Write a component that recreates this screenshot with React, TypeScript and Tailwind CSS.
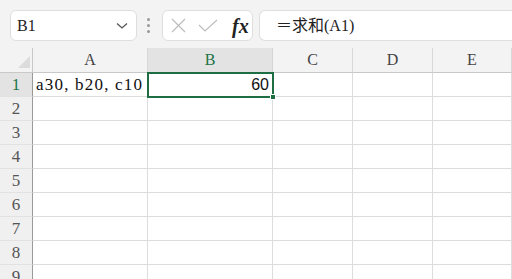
import React from 'react';

const cols = [
  { name: 'A', w: 'w-[115px] shrink-0' },
  { name: 'B', w: 'w-[125px] shrink-0' },
  { name: 'C', w: 'w-[80px] shrink-0' },
  { name: 'D', w: 'w-[80px] shrink-0' },
  { name: 'E', w: 'min-w-0 flex-1' },
];

const rows = [1, 2, 3, 4, 5, 6, 7, 8, 9];

const serif = "font-['Liberation_Serif','Noto_Sans_CJK_SC',serif]";
const sans = "font-['Liberation_Sans','Noto_Sans',sans-serif]";

const Toolbar: React.FC = () => (
  <div className="flex h-[47px] items-start bg-[#f3f3f3] pl-[10px] pt-[10px]">
    <div className="flex h-[31px] w-[127px] shrink-0 items-center justify-between rounded-md border border-[#dedede] bg-white pl-[6px] pr-[8px]">
      <span className={`${serif} text-[16px] text-[#222]`}>B1</span>
      <svg width="12" height="8" viewBox="0 0 12 8" fill="none">
        <path d="M1 1.5 L6 6 L11 1.5" stroke="#555" strokeWidth="1.3" />
      </svg>
    </div>
    <div className="ml-[10px] flex h-[31px] shrink-0 flex-col items-center justify-center gap-[3px]">
      <span className="h-[3px] w-[3px] rounded-full bg-[#999]" />
      <span className="h-[3px] w-[3px] rounded-full bg-[#999]" />
      <span className="h-[3px] w-[3px] rounded-full bg-[#999]" />
    </div>
    <div className="ml-[12px] flex h-[31px] w-[91px] shrink-0 items-center rounded-md border border-[#dedede] bg-white pl-[8px]">
      <svg width="15" height="15" viewBox="0 0 15 15" fill="none">
        <path d="M1 1 L14 14 M14 1 L1 14" stroke="#bdbdbd" strokeWidth="1.2" />
      </svg>
      <svg className="ml-[12px]" width="20" height="13" viewBox="0 0 20 13" fill="none">
        <path d="M1 6 L7 12 L19 1" stroke="#bdbdbd" strokeWidth="1.2" />
      </svg>
      <span className={`${serif} ml-[14px] text-[20px] font-bold italic leading-none text-[#222]`}>fx</span>
    </div>
    <div className="ml-[6px] flex h-[31px] flex-1 items-center rounded-l-md border border-r-0 border-[#dedede] bg-white pl-[16px]">
      <span className={`${serif} text-[16px] text-[#222]`}>＝求和(A1)</span>
    </div>
  </div>
);

const App: React.FC = () => {
  return (
    <div className="relative h-[279px] w-[512px] overflow-hidden bg-white">
      <Toolbar />
      <div className="flex h-[26px] bg-[#f3f3f3] pt-[1px]">
        <div className="relative h-[25px] w-[33px] shrink-0 border-b border-r border-[#c8c8c8]">
          <svg className="absolute bottom-[4px] right-[2px]" width="12" height="12" viewBox="0 0 12 12">
            <path d="M12 0 L12 12 L0 12 Z" fill="#dcdcdc" />
          </svg>
        </div>
        {cols.map((c) => (
          <div
            key={c.name}
            className={`${c.w} ${serif} flex h-[25px] items-center justify-center border-b border-r text-[16px] ${
              c.name === 'B'
                ? 'border-b-[#c8c8c8] border-r-[#d4d4d4] bg-[#e3e3e3] text-[#217346]'
                : 'border-[#d8d8d8] border-b-[#c8c8c8] text-[#444]'
            }`}
          >
            {c.name}
          </div>
        ))}
      </div>
      {rows.map((r) => (
        <div key={r} className="flex h-[24px]">
          <div
            className={`${serif} flex h-[24px] w-[33px] shrink-0 items-center justify-center border-b border-r border-b-[#e2e2e2] border-r-[#9a9a9a] text-[17px] text-[#555] ${
              r === 1 ? 'bg-[#e3e3e3] text-[#217346]' : 'bg-[#f0f0f0]'
            }`}
          >
            {r}
          </div>
          {cols.map((c) => (
            <div
              key={c.name}
              className={`${c.w} flex h-[24px] items-center overflow-hidden border-b border-r border-[#dcdcdc] text-[16px] text-[#111]`}
            >
              {r === 1 && c.name === 'A' && (
                <span className={`${serif} whitespace-nowrap pl-[3px] text-[17px] tracking-[1.2px]`}>a30, b20, c10</span>
              )}
              {r === 1 && c.name === 'B' && <span className={`${sans} w-full pr-[3px] text-right`}>60</span>}
            </div>
          ))}
        </div>
      ))}
      <div className="pointer-events-none absolute left-[147px] top-[72px] h-[26px] w-[127px] border-2 border-[#1f6e43]">
        <div className="absolute -bottom-[4px] -right-[4px] h-[6px] w-[6px] border border-white bg-[#1f6e43]" />
      </div>
    </div>
  );
};

export default App;
